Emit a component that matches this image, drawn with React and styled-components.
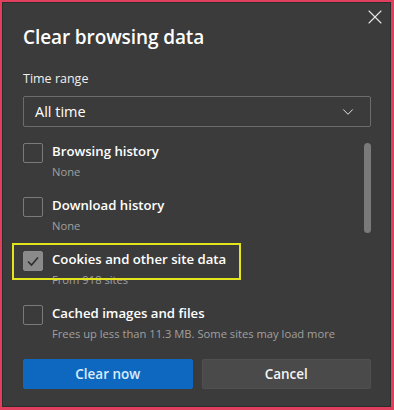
import React from "react";
import styled, { createGlobalStyle } from "styled-components";
import { ChevronDown, X } from "lucide-react";

const Global = createGlobalStyle`
  html, body { margin: 0; padding: 0; background: #3b3b3b; }
  body { font-family: "Open Sans", "Noto Sans", sans-serif; }
  * { box-sizing: border-box; }
`;

const Frame = styled.div`
  width: 394px;
  height: 410px;
  border: solid #e03f5e;
  border-width: 2px 3px 3px 2px;
  background: #2c2c2c;
  padding: 1px;
  display: flex;
`;

const Dialog = styled.div`
  flex: 1;
  background: #3b3b3b;
  padding: 0 19px 0 20px;
  display: flex;
  flex-direction: column;
  position: relative;
`;

const Header = styled.div`
  display: flex;
  justify-content: space-between;
  align-items: flex-start;
  height: 67px;
`;

const Title = styled.h1`
  margin: 20px 0 0;
  font-size: 19px;
  font-weight: 600;
  color: #ffffff;
  line-height: 28px;
  letter-spacing: -0.1px;
`;

const CloseButton = styled.button`
  margin: 2px -16px 0 0;
  width: 24px;
  height: 24px;
  padding: 0;
  border: none;
  background: transparent;
  color: #e6e6e6;
  display: flex;
  align-items: center;
  justify-content: center;
`;

const FieldLabel = styled.div`
  font-size: 12.5px;
  color: #f0f0f0;
  line-height: 18px;
  margin-bottom: 8px;
`;

const Select = styled.div`
  height: 31px;
  border: 1px solid #6c6c6c;
  border-radius: 2px;
  display: flex;
  align-items: center;
  justify-content: space-between;
  padding: 0 13px 0 11px;
  font-size: 14.5px;
  color: #ffffff;
`;

const ListArea = styled.div`
  display: flex;
  margin-top: 16px;
  height: 202px;
`;

const List = styled.div`
  flex: 1;
  display: flex;
  flex-direction: column;
  gap: 17px;
`;

const Scrollbar = styled.div`
  width: 8px;
  margin-right: -1px;
`;

const Thumb = styled.div`
  width: 7px;
  height: 90px;
  border-radius: 4px;
  background: #7a7a7a;
`;

const Row = styled.div`
  position: relative;
  display: grid;
  grid-template-columns: 20px 1fr;
  column-gap: 9px;
`;

const Box = styled.span`
  width: 20px;
  height: 20px;
  border: 1px solid ${(p) => (p.$checked ? "#8c8c8c" : "#7a7a7a")};
  background: ${(p) => (p.$checked ? "#8a8a8a" : "transparent")};
  border-radius: 2px;
  display: flex;
  align-items: center;
  justify-content: center;
`;

const Text = styled.div`
  display: flex;
  flex-direction: column;
`;

const Label = styled.div`
  font-size: 13.2px;
  font-weight: 600;
  color: #ffffff;
  line-height: 20px;
  margin-top: -2px;
`;

const Sub = styled.div`
  font-size: 11.2px;
  color: #a0a0a0;
  line-height: 16px;
  margin-top: 3px;
`;

const Highlight = styled.div`
  position: absolute;
  left: -11px;
  top: -8px;
  width: 229px;
  height: 37px;
  border: 2px solid #e4e41c;
  pointer-events: none;
`;

const Buttons = styled.div`
  display: grid;
  grid-template-columns: 1fr 1fr;
  column-gap: 9px;
  margin-top: 14px;
`;

const Button = styled.button`
  height: 30px;
  border: 1px solid ${(p) => (p.$primary ? "#1068c0" : "#505050")};
  border-radius: 2px;
  background: ${(p) => (p.$primary ? "#0f68c0" : "#4a4a4a")};
  color: ${(p) => (p.$primary ? "#d9ecff" : "#f4f4f4")};
  font-family: inherit;
  font-size: 13.5px;
  font-weight: 600;
  padding: 0;
`;

const items = [
  { label: "Browsing history", sub: "None" },
  { label: "Download history", sub: "None" },
  { label: "Cookies and other site data", sub: "From 918 sites", checked: true, highlight: true },
  { label: "Cached images and files", sub: "Frees up less than 11.3 MB. Some sites may load more" },
];

function Check() {
  return (
    <svg width="14" height="14" viewBox="0 0 14 14" fill="none">
      <path d="M2 7.5 L5.5 11 L12 3.5" stroke="#2e2e2e" strokeWidth="1.6" />
    </svg>
  );
}

export default function App() {
  return (
    <>
      <Global />
      <Frame>
        <Dialog>
          <Header>
            <Title>Clear browsing data</Title>
            <CloseButton aria-label="Close">
              <X size={24} strokeWidth={1.1} />
            </CloseButton>
          </Header>
          <FieldLabel>Time range</FieldLabel>
          <Select>
            <span>All time</span>
            <ChevronDown size={18} strokeWidth={1.3} color="#e6e6e6" />
          </Select>
          <ListArea>
            <List>
              {items.map((it) => (
                <Row key={it.label}>
                  <Box $checked={it.checked}>{it.checked && <Check />}</Box>
                  <Text>
                    <Label>{it.label}</Label>
                    <Sub>{it.sub}</Sub>
                  </Text>
                  {it.highlight && <Highlight />}
                </Row>
              ))}
            </List>
            <Scrollbar>
              <Thumb />
            </Scrollbar>
          </ListArea>
          <Buttons>
            <Button $primary>Clear now</Button>
            <Button>Cancel</Button>
          </Buttons>
        </Dialog>
      </Frame>
    </>
  );
}
